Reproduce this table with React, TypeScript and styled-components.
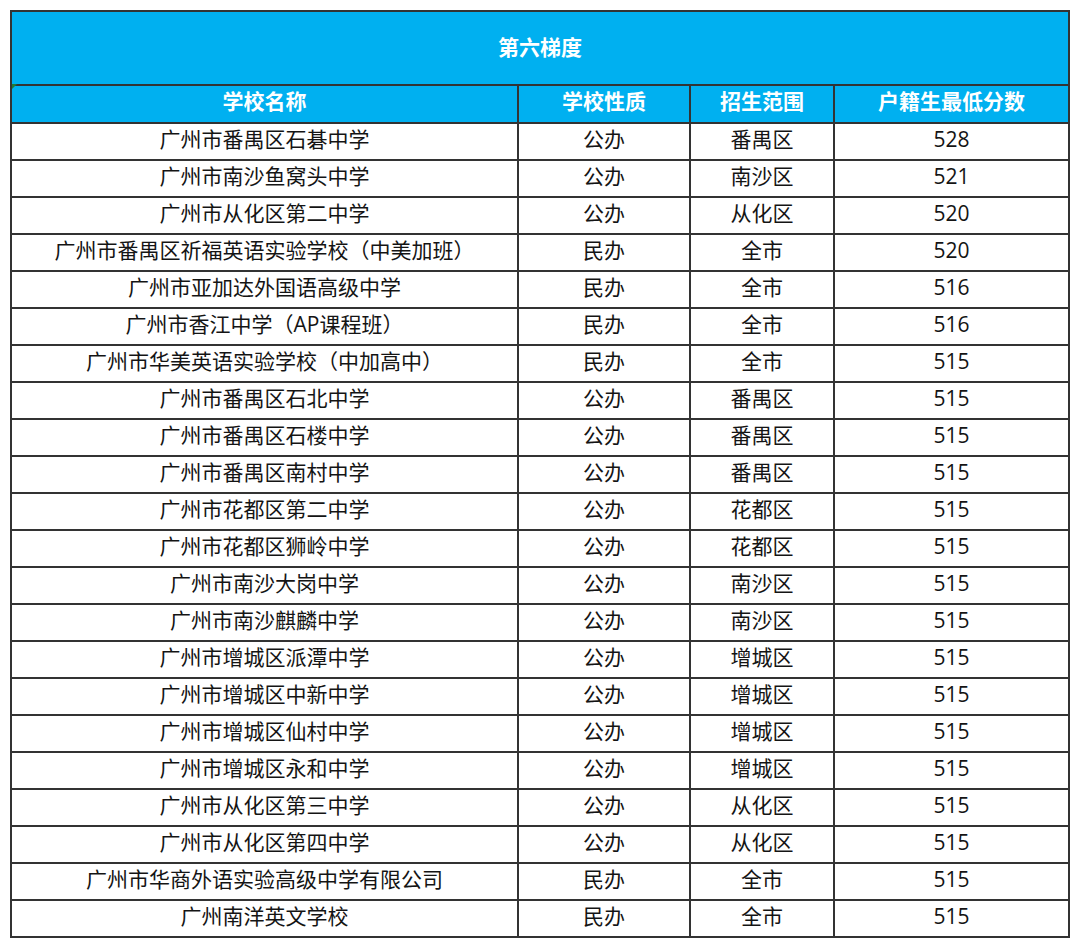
import * as React from 'react'
import styled, { createGlobalStyle } from 'styled-components'

const GlobalStyle = createGlobalStyle`
  html, body {
    margin: 0;
    padding: 0;
    background: #ffffff;
  }
  body {
    font-family: 'Open Sans', 'Noto Sans CJK SC', sans-serif;
  }
`

const blue = '#00b0f0'
const line = '#333333'
const columns = '505px 172px 144px 235px'

const Page = styled.div`
  padding: 10px 0 0 10px;
  width: 1080px;
  height: 949px;
  box-sizing: border-box;
`

const Table = styled.div`
  position: relative;
  width: 1060px;
  box-sizing: border-box;
  border: 2px solid ${line};
`

const Title = styled.div`
  height: 72px;
  background: ${blue};
  color: #ffffff;
  font-weight: 700;
  font-size: 21px;
  display: flex;
  align-items: center;
  justify-content: center;
  padding-bottom: 5px;
  box-sizing: border-box;
`

const Row = styled.div<{ $head?: boolean }>`
  display: grid;
  grid-template-columns: ${columns};
  height: ${(p) => (p.$head ? 38 : 37)}px;
  box-sizing: border-box;
  border-top: 2px solid ${line};
  background: ${(p) => (p.$head ? blue : '#ffffff')};
  color: ${(p) => (p.$head ? '#ffffff' : '#141414')};
  font-weight: ${(p) => (p.$head ? 700 : 400)};
`

const Cell = styled.div`
  display: flex;
  align-items: center;
  justify-content: center;
  font-size: 21px;
  line-height: 1;
  white-space: nowrap;
  padding-bottom: 5px;
  box-sizing: border-box;
  & + & {
    border-left: 2px solid ${line};
  }
`

const Marker = styled.div`
  position: absolute;
  left: 0;
  top: 72px;
  width: 0;
  height: 0;
  border-top: 5px solid #1f7a3a;
  border-right: 5px solid transparent;
`

type School = [string, string, string, number]

const schools: School[] = [
  ['广州市番禺区石碁中学', '公办', '番禺区', 528],
  ['广州市南沙鱼窝头中学', '公办', '南沙区', 521],
  ['广州市从化区第二中学', '公办', '从化区', 520],
  ['广州市番禺区祈福英语实验学校（中美加班）', '民办', '全市', 520],
  ['广州市亚加达外国语高级中学', '民办', '全市', 516],
  ['广州市香江中学（AP课程班）', '民办', '全市', 516],
  ['广州市华美英语实验学校（中加高中）', '民办', '全市', 515],
  ['广州市番禺区石北中学', '公办', '番禺区', 515],
  ['广州市番禺区石楼中学', '公办', '番禺区', 515],
  ['广州市番禺区南村中学', '公办', '番禺区', 515],
  ['广州市花都区第二中学', '公办', '花都区', 515],
  ['广州市花都区狮岭中学', '公办', '花都区', 515],
  ['广州市南沙大岗中学', '公办', '南沙区', 515],
  ['广州市南沙麒麟中学', '公办', '南沙区', 515],
  ['广州市增城区派潭中学', '公办', '增城区', 515],
  ['广州市增城区中新中学', '公办', '增城区', 515],
  ['广州市增城区仙村中学', '公办', '增城区', 515],
  ['广州市增城区永和中学', '公办', '增城区', 515],
  ['广州市从化区第三中学', '公办', '从化区', 515],
  ['广州市从化区第四中学', '公办', '从化区', 515],
  ['广州市华商外语实验高级中学有限公司', '民办', '全市', 515],
  ['广州南洋英文学校', '民办', '全市', 515],
]

const headers = ['学校名称', '学校性质', '招生范围', '户籍生最低分数']

export default function App() {
  return (
    <Page>
      <GlobalStyle />
      <Table>
        <Title>第六梯度</Title>
        <Row $head>
          {headers.map((h) => (
            <Cell key={h}>{h}</Cell>
          ))}
        </Row>
        {schools.map(([name, kind, area, score]) => (
          <Row key={name}>
            <Cell>{name}</Cell>
            <Cell>{kind}</Cell>
            <Cell>{area}</Cell>
            <Cell>{score}</Cell>
          </Row>
        ))}
        <Marker />
      </Table>
    </Page>
  )
}
